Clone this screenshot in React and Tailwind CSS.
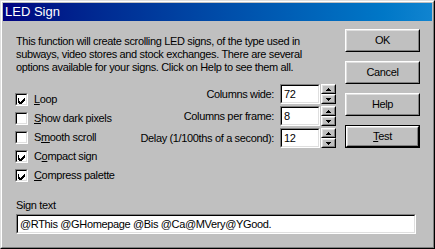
const raised = 'border border-t-white border-l-white border-r-black border-b-black';
const raisedInner = 'border border-t-[#dfdfdf] border-l-[#dfdfdf] border-r-[#808080] border-b-[#808080]';

function Btn({ children, isDefault }) {
  const body = (
    <div className={raised + ' h-full'}>
      <div className={raisedInner + ' h-full flex items-center justify-center bg-[#c0c0c0]'}>{children}</div>
    </div>
  );
  if (isDefault) {
    return <div className="w-[75px] h-[23px] border border-black">{body}</div>;
  }
  return <div className="w-[75px] h-[23px]">{body}</div>;
}

function Sunken({ className, children }) {
  return (
    <div className={'border border-t-[#808080] border-l-[#808080] border-r-white border-b-white ' + className}>
      <div className="h-full border border-t-black border-l-black border-r-[#dfdfdf] border-b-[#dfdfdf] bg-white flex items-center px-[2px] whitespace-nowrap">
        {children}
      </div>
    </div>
  );
}

function Check({ checked, label, u }) {
  const i = label.indexOf(u);
  return (
    <div className="flex items-center h-[19px]">
      <div className="w-[13px] h-[13px] border border-t-[#808080] border-l-[#808080] border-r-white border-b-white">
        <div className="w-full h-full border border-t-black border-l-black border-r-[#dfdfdf] border-b-[#dfdfdf] bg-white">
          {checked && (
            <svg width="9" height="9" viewBox="0 0 9 9" shapeRendering="crispEdges">
              <path d="M1 3h1v3h1v1h1v-1h1v-1h1v-1h1v-1h1v3h-1v1h-1v1h-1v1h-1v1h-1v-1h-1v-1h-1z" fill="#000" />
            </svg>
          )}
        </div>
      </div>
      <span className="ml-[6px] whitespace-nowrap">
        {label.slice(0, i)}
        <span className="underline">{u}</span>
        {label.slice(i + 1)}
      </span>
    </div>
  );
}

function Spin({ label, value }) {
  return (
    <div className="flex items-center h-[20px]">
      <span className="w-[145px] text-right pr-[6px] whitespace-nowrap">{label}</span>
      <Sunken className="w-[40px] h-[20px]">{value}</Sunken>
      <div className="flex flex-col ml-[1px]">
        {['up', 'down'].map((d) => (
          <div key={d} className={raised + ' w-[15px] h-[10px]'}>
            <div className={raisedInner + ' h-full flex items-center justify-center'}>
              <svg width="5" height="3" viewBox="0 0 5 3" shapeRendering="crispEdges">
                {d === 'up' ? (
                  <path d="M2 0h1v1h1v1h1v1h-5v-1h1v-1h1z" fill="#000" />
                ) : (
                  <path d="M0 0h5v1h-1v1h-1v1h-1v-1h-1v-1h-1z" fill="#000" />
                )}
              </svg>
            </div>
          </div>
        ))}
      </div>
    </div>
  );
}

export default function App() {
  return (
    <div
      className="w-[435px] h-[249px] bg-[#c0c0c0] text-black text-[11px] leading-[13px] tracking-[-0.35px] border border-t-[#dfdfdf] border-l-[#dfdfdf] border-r-black border-b-black"
      style={{ fontFamily: '"Liberation Sans", Arial, sans-serif' }}
    >
      <div className="h-full border border-t-white border-l-white border-r-[#808080] border-b-[#808080] p-[1px] flex flex-col">
        {/* Title bar */}
        <div className="h-[18px] bg-gradient-to-r from-[#000080] to-[#1084d0] text-white text-[13px] leading-[18px] tracking-normal pl-[2px]">
          LED Sign
        </div>

        <div className="flex">
          {/* Left side */}
          <div className="w-[320px] ml-[13px] flex flex-col">
            <p className="mt-[14px] pr-[20px]">
              This function will create scrolling LED signs, of the type used in subways, video stores and stock exchanges. There are several options available for your signs. Click on Help to see them all.
            </p>
            <div className="flex">
              <div className="mt-[16px] -ml-[1px] flex flex-col">
                <Check checked label="Loop" u="L" />
                <Check label="Show dark pixels" u="S" />
                <Check label="Smooth scroll" u="m" />
                <Check checked label="Compact sign" u="o" />
                <Check checked label="Compress palette" u="C" />
              </div>
              <div className="ml-auto mt-[10px] flex flex-col gap-[2px]">
                <Spin label="Columns wide:" value="72" />
                <Spin label="Columns per frame:" value="8" />
                <Spin label="Delay (1/100ths of a second):" value="12" />
              </div>
            </div>
          </div>

          {/* Buttons */}
          <div className="ml-[9px] mt-[8px] flex flex-col gap-[9px]">
            <Btn>OK</Btn>
            <Btn>Cancel</Btn>
            <Btn>Help</Btn>
            <Btn isDefault>
              <span>
                <span className="underline">T</span>est
              </span>
            </Btn>
          </div>
        </div>

        {/* Sign text */}
        <div className="ml-[13px] mt-[14px]">
          <div>Sign text</div>
          <Sunken className="w-[400px] h-[20px] mt-[2px]">@RThis @GHomepage @Bis @Ca@MVery@YGood.</Sunken>
        </div>
      </div>
    </div>
  );
}
